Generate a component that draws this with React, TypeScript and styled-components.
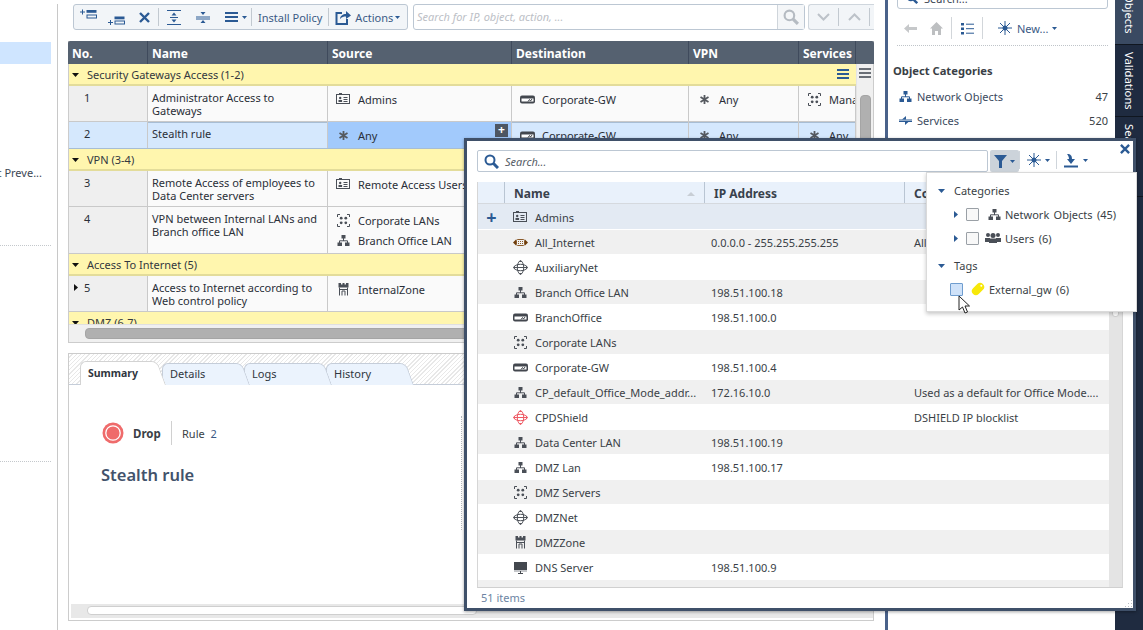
import React from "react";
import styled, { createGlobalStyle } from "styled-components";

const Global = createGlobalStyle`
  html, body { margin: 0; padding: 0; background: #fff; overflow: hidden; }
  * { box-sizing: border-box; }
  body { font-family: "Noto Sans", "Liberation Sans", sans-serif; font-size: 11px; color: #2a2f38; }
`;

const Page = styled.div`
  position: relative; width: 1143px; height: 630px; overflow: hidden; display: flex; background: #fff;
`;

/* ---------- icons ---------- */
type IP = { c?: string; s?: number };
const Svg = styled.svg`flex: none; display: block;`;
const IdCard = ({ c = "#4a4f57", s = 14 }: IP) => (
  <Svg width={s} height={s} viewBox="0 0 14 14"><rect x=".5" y="2.5" width="13" height="9" fill="none" stroke={c} /><rect x="3" y="1" width="3" height="2" fill={c} /><circle cx="4.2" cy="6" r="1.2" fill={c} /><rect x="2.5" y="8" width="3.6" height="2" fill={c} /><path d="M7.5 5.5h4M7.5 7.5h4M7.5 9.5h4" stroke={c} /></Svg>
);
const Gateway = ({ c = "#43474e", s = 15 }: IP) => (
  <Svg width={s} height={s} viewBox="0 0 15 15"><rect x="0" y="3.500" width="15" height="8" rx="2" fill={c} /><rect x="1.500" y="6.500" width="12" height="3" fill="#fff" /><path d="M8 9.500l1.500-2 1 1.500 1.500-2" stroke={c} fill="none" /></Svg>
);
const AnyIcon = ({ c = "#55595f", s = 11 }: IP) => (
  <Svg width={s} height={s} viewBox="0 0 11 11"><path d="M5.5 1v9M1.5 3l8 5M9.5 3l-8 5" stroke={c} strokeWidth="1.8" /></Svg>
);
const GroupIcon = ({ c = "#4a4f57", s = 13 }: IP) => (
  <Svg width={s} height={s} viewBox="0 0 13 13"><path d="M3 .5H.5V3M10 .5h2.500V3M.5 10v2.500H3M12.500 10v2.500H10" stroke={c} fill="none" /><circle cx="4.200" cy="4.200" r="1.400" fill={c} /><circle cx="8.800" cy="4.200" r="1.400" fill={c} /><circle cx="4.200" cy="8.800" r="1.400" fill={c} /><circle cx="8.800" cy="8.800" r="1.400" fill={c} /></Svg>
);
const TreeIcon = ({ c = "#4a4f57", s = 13 }: IP) => (
  <Svg width={s} height={s} viewBox="0 0 13 13"><rect x="4.500" y="1" width="4" height="3.500" fill={c} /><path d="M6.500 4v3M2.500 9V6.800h8V9" stroke={c} fill="none" /><rect x=".5" y="8.500" width="4.500" height="3.500" fill={c} /><rect x="8" y="8.500" width="4.500" height="3.500" fill={c} /></Svg>
);
const ZoneIcon = ({ c = "#4a4f57", s = 13 }: IP) => (
  <Svg width={s} height={s} viewBox="0 0 13 13"><path d="M1.500 0h2.500v1.500h1.500V0h2v1.500H9V0h2.500v4.500h-10z" fill={c} /><path d="M2.500 4.500v8M10.500 4.500v8M5 12.500V8h3v4.500M2.500 6.500h8" stroke={c} fill="none" /></Svg>
);
const NetIcon = ({ c = "#50555c", s = 15 }: IP) => (
  <Svg width={s} height={s} viewBox="0 0 15 15"><ellipse cx="7.500" cy="7.500" rx="6.500" ry="3.200" fill="none" stroke={c} /><ellipse cx="7.500" cy="7.500" rx="3.200" ry="6.500" fill="none" stroke={c} /><path d="M7.500 0l2 2h-4zM7.500 15l2-2h-4zM0 7.500l2-2v4zM15 7.500l-2-2v4z" fill={c} /><path d="M1 7.500h13" stroke={c} /></Svg>
);
const RangeIcon = () => (
  <Svg width={15} height={15} viewBox="0 0 15 15"><path d="M3 4.500L0 7.500l3 3zM12 4.500l3 3-3 3z" fill="#6e3d0c" /><rect x="3.500" y="4.500" width="8" height="6" rx="1" fill="none" stroke="#8a5a2a" /><path d="M5 6.500h5M5 8.500h5" stroke="#8a5a2a" strokeDasharray="1 1" /></Svg>
);
const Monitor = ({ c = "#43474e" }: IP) => (
  <Svg width={13} height={13} viewBox="0 0 13 13"><rect x="0" y="1" width="13" height="8" fill={c} /><rect x="0" y="9.500" width="13" height="1" fill="#8b8f95" /><path d="M4 12.500h5M6.500 10v2" stroke={c} /></Svg>
);
const Glass = ({ c = "#2b5a94", s = 15, w = 2 }: IP & { w?: number }) => (
  <Svg width={s} height={s} viewBox="0 0 15 15"><circle cx="6" cy="6" r="4.500" fill="none" stroke={c} strokeWidth={w} /><path d="M9.500 9.500L14 14" stroke={c} strokeWidth={w + 1} /></Svg>
);
const Caret = ({ c = "#2b5a94" }: IP) => (
  <Svg width={5} height={3} viewBox="0 0 5 3"><path d="M0 0h5L2.500 3z" fill={c} /></Svg>
);
const Tri = ({ dir = "down", c = "#111" }: { dir?: "down" | "right"; c?: string }) => (
  <Svg width={7} height={7} viewBox="0 0 7 7">{dir === "down" ? <path d="M0 2h7L3.500 6z" fill={c} /> : <path d="M2 0l4 3.500L2 7z" fill={c} />}</Svg>
);
const Burger = ({ c = "#2b5a94", s = 12 }: IP) => (
  <Svg width={s} height={10} viewBox="0 0 12 10" preserveAspectRatio="none"><path d="M0 1h12M0 5h12M0 9h12" stroke={c} strokeWidth="2" /></Svg>
);
const AddAbove = () => (
  <Svg width={17} height={11} viewBox="0 0 17 11"><path d="M0 3h5M2.500 .5v5" stroke="#2b5a94" /><rect x="6.500" y="1" width="10" height="2.800" fill="#2b5a94" /><rect x="7" y="6" width="9.500" height="3" fill="none" stroke="#2b5a94" /></Svg>
);
const AddBelow = () => (
  <Svg width={17} height={11} viewBox="0 0 17 11"><rect x="7" y="6" width="9.500" height="3" fill="none" stroke="#2b5a94" /><rect x="6.500" y="1.500" width="10" height="2.800" fill="#2b5a94" /><path d="M0 7.500h5M2.500 5v5" stroke="#2b5a94" /></Svg>
);
const Cross = ({ s = 11, w = 2.400 }: IP & { w?: number }) => (
  <Svg width={s} height={s} viewBox="0 0 11 11"><path d="M1 1l9 9M10 1l-9 9" stroke="#2b5a94" strokeWidth={w} /></Svg>
);
const Expand = () => (
  <Svg width={16} height={15} viewBox="0 0 16 15"><path d="M1 .5h14M1 14.500h14" stroke="#2b5a94" /><path d="M8 2.500l2.500 3h-5zM8 12.500l2.500-3h-5z" fill="#2b5a94" /><path d="M4 7.500h8" stroke="#2b5a94" /></Svg>
);
const Collapse = () => (
  <Svg width={16} height={15} viewBox="0 0 16 15"><path d="M8 5l2.500-3h-5zM8 10l2.500 3h-5z" fill="#2b5a94" /><path d="M1 7h14M1 9h14" stroke="#2b5a94" /></Svg>
);
const Share = () => (
  <Svg width={17} height={15} viewBox="0 0 17 15"><path d="M7 3H1.500v11H12V9" fill="none" stroke="#2b5a94" strokeWidth="2" /><path d="M5 9c0-3 3-5 6-5V1l5 4.500L11 9V6.500C9 6.500 6.500 7 5 9z" fill="#2b5a94" /></Svg>
);
const Star = () => (
  <Svg width={14} height={14} viewBox="0 0 14 14"><circle cx="7" cy="7" r="2.500" fill="#2b5a94" /><path d="M7 0v14M0 7h14M2 2l10 10M12 2L2 12" stroke="#2b5a94" /></Svg>
);
const Filter = () => (
  <Svg width={13} height={13} viewBox="0 0 13 13"><path d="M0 0h13L8 6v7H5V6z" fill="#2b5a94" /></Svg>
);
const ExportIcon = () => (
  <Svg width={15} height={15} viewBox="0 0 15 15"><path d="M3 1c4 0 5 2 5 5h3l-4 5-4-5h2C5 4 4 2 3 1z" fill="#2b5a94" /><path d="M0 13.500h14" stroke="#2b5a94" strokeWidth="2" /></Svg>
);
const Chev = ({ up }: { up?: boolean }) => (
  <Svg width={13} height={8} viewBox="0 0 13 8"><path d={up ? "M1 7l5.500-5.500L12 7" : "M1 1l5.500 5.500L12 1"} fill="none" stroke="#bcc2c9" strokeWidth="2" /></Svg>
);
const ArrowLeft = () => (
  <Svg width={13} height={9} viewBox="0 0 13 9"><path d="M0 4.500L5 0v3h8v3H5v3z" fill="#c6c8ca" /></Svg>
);
const Home = () => (
  <Svg width={13} height={13} viewBox="0 0 13 13"><path d="M6.500 0L13 6.500h-2V13H8V9H5v4H2V6.500H0z" fill="#bdbfc1" /></Svg>
);
const ListIcon = () => (
  <Svg width={13} height={13} viewBox="0 0 13 13"><path d="M0 1h3v2.400H0zM0 5.500h3v2.400H0zM0 10h3v2.400H0z" fill="#2b5a94" /><path d="M5 2.200h8M5 6.700h8M5 11.200h8" stroke="#2b5a94" /></Svg>
);
const ServicesIcon = () => (
  <Svg width={13} height={11} viewBox="0 0 13 11"><path d="M0 5h13M0 6.500h13" stroke="#2b5a94" /><path d="M3 4.500L7 1v3.500zM6 6.500h4L6 10z" fill="#2b5a94" /></Svg>
);
const UsersIcon = () => (
  <Svg width={16} height={12} viewBox="0 0 16 12"><circle cx="3" cy="3" r="2" fill="#4a4f57" /><circle cx="13" cy="3" r="2" fill="#4a4f57" /><circle cx="8" cy="3.500" r="2.500" fill="#4a4f57" /><path d="M0 10V6h5v4zM11 10V6h5v4zM4 11V6.500h8V11z" fill="#4a4f57" /></Svg>
);
const TagIcon = () => (
  <Svg width={14} height={14} viewBox="0 0 14 14"><rect x="0" y="3" width="14" height="8" rx="4" fill="#f7e80a" transform="rotate(-45 7 7)" /><circle cx="10.300" cy="3.700" r="1" fill="#fff" /></Svg>
);
const DropMark = () => (
  <Svg width={22} height={22} viewBox="0 0 22 22"><circle cx="11" cy="11" r="10.500" fill="#ef6b6b" /><circle cx="11" cy="11" r="7.200" fill="none" stroke="#fff" strokeWidth="1.300" /></Svg>
);
const CursorMark = () => (
  <Svg width={13} height={19} viewBox="0 0 13 19"><path d="M1 1v14l3.500-3 2.500 6 2.500-1-2.500-6h4.500z" fill="#fff" stroke="#222" strokeWidth="1" /></Svg>
);

/* ---------- left sidebar ---------- */
const Sidebar = styled.aside`
  width: 58px; flex: none; margin-top: 4px; border-right: 1px solid #c8c8c8; padding-top: 38px;
`;
const SideSelected = styled.div`width: 51px; height: 22px; background: #cfe5ff;`;
const SideText = styled.div`
  width: 42px; margin-top: 101px; height: 16px; line-height: 16px; display: flex; justify-content: flex-end;
  overflow: hidden; white-space: nowrap; color: #3c4654;
`;
const SideDots = styled.div<{ $gap: number }>`
  width: 51px; margin-top: ${p => p.$gap}px; border-top: 1px dotted #c4c8cc;
`;

/* ---------- main ---------- */
const Main = styled.main`
  width: 827px; flex: none; display: flex; flex-direction: column;
`;
const TopRow = styled.div`
  display: flex; height: 26px; margin: 4px 0 11px 15px;
`;
const Toolbar = styled.div`
  width: 335px; border: 1px solid #bcc7d3; border-radius: 3px; background: #f2f5f8; position: relative;
  display: flex; align-items: center; padding-left: 6px;
`;
const ToolSlot = styled.div<{ $w: number; $dy?: number }>`
  width: ${p => p.$w}px; flex: none; display: flex; align-items: center; justify-content: center; gap: 4px;
  transform: translateY(${p => p.$dy || 0}px);
`;
const ToolSep = styled.div`width: 1px; height: 18px; background: #c2c9d0; flex: none;`;
const ToolText = styled.div<{ $tight?: boolean }>`
  color: #3b5a85; font-size: 11px; white-space: nowrap; flex: none;
  padding: ${p => p.$tight ? "0 2px 0 3px" : "0 6px"};
`;
const SearchBox = styled.div`
  width: 392px; margin-left: 5px; display: flex; border: 1px solid #bcc7d3; border-radius: 3px; background: #fff;
`;
const SearchHint = styled.div`
  flex: 1; color: #bcc0c6; font-style: italic; padding-left: 3px; line-height: 24px; font-size: 11px;
`;
const SearchBtn = styled.div`
  width: 27px; border-left: 1px solid #cfd5db; background: #f4f6f8; display: flex; align-items: center; justify-content: center;
`;
const NavBox = styled.div`
  width: 66px; margin-left: 3px; display: flex; align-items: center; border: 1px solid #cfd6dd; border-right: none;
  border-radius: 3px 0 0 3px; background: #f2f5f8;
`;
const NavSlot = styled.div<{ $w: number }>`
  width: ${p => p.$w}px; height: 18px; flex: none; display: flex; align-items: center; justify-content: center;
  & + & { border-left: 1px solid #c2c9d0; }
`;

/* ---------- rule table ---------- */
const RuleTable = styled.section`
  width: 806px; height: 302px; margin-left: 10px; display: flex; flex-direction: column;
  border-left: 1px solid #ccc; border-right: 1px solid #ccc; border-bottom: 1px solid #ccc;
`;
const HeadRow = styled.div`
  display: grid; grid-template-columns: 80px 180px 184px 177px 110px 57px 18px; height: 23px; background: #556170; flex: none;
  border-radius: 2px 2px 0 0; margin-left: -1px; margin-right: -1px;
`;
const HeadCell = styled.div`
  color: #fff; font-weight: 700; font-size: 12px; line-height: 25px; padding-left: 4px; white-space: nowrap; overflow: hidden;
  border-right: 1px solid #3f4a5c;
  &:last-child { border-right: none; }
`;
const TableMid = styled.div`display: flex; flex: 1; min-height: 0;`;
const RuleBody = styled.div`width: 787px; overflow: hidden;`;
const GroupRow = styled.div`
  height: 22px; background: #fff6ae; border-bottom: 2px solid #e3dc9a; display: flex; align-items: center;
  padding: 0 7px 0 3px; gap: 8px; color: #33383f; white-space: nowrap;
`;
const GroupSpacer = styled.div`flex: 1;`;
const RuleRow = styled.div<{ $h: number; $sel?: boolean }>`
  display: grid; grid-template-columns: 79px 180px 184px 177px 110px 57px; height: ${p => p.$h}px;
  border-bottom: 1px solid ${p => p.$sel ? "#a7bdd4" : "#c9c9c9"};
  background: ${p => p.$sel ? "#d5e8fd" : "#fafafa"};
  ${p => p.$sel ? "box-shadow: inset 0 1px 0 #a7bdd4;" : ""}
`;
const RCell = styled.div<{ $hl?: boolean }>`
  position: relative; border-right: 1px solid #c9c9c9; padding: 5px 0 0 4px; line-height: 13px; color: #2a2f38; overflow: hidden;
  ${p => p.$hl ? "background: #a2cafc;" : ""}
`;
const NoCell = styled.div<{ $sel?: boolean }>`
  border-right: 1px solid #c9c9c9; line-height: 13px; padding: 5px 0 0 3px; display: flex; gap: 2px; color: #2a2f38;
  background: ${p => p.$sel ? "#d5e8fd" : "#efefef"};
`;
const NoSpacer = styled.div`width: 10px; display: flex; padding-top: 3px;`;
const ObjList = styled.div`display: flex; flex-direction: column; gap: 6px; padding: 1px 0 0 4px;`;
const Obj = styled.div`display: flex; align-items: center; height: 14px; gap: 8px; white-space: nowrap;`;
const IconBox = styled.div`width: 14px; display: flex; justify-content: center; flex: none;`;
const PlusBadge = styled.div`
  position: absolute; right: 3px; top: 2px; width: 13px; height: 13px; background: #4d5663; color: #fff;
  text-align: center; line-height: 12px; font-size: 12px; font-weight: 700;
`;
const VScroll = styled.div`
  width: 17px; flex: none; background: #f0f0f0; border-left: 1px solid #e4e4e4; display: flex; flex-direction: column; align-items: center; padding-top: 4px;
`;
const VThumb = styled.div`
  width: 11px; height: 120px; margin-top: 17px; background: #b0b0b0; border-radius: 4px; border: 1px solid #a5a5a5;
`;
const HScroll = styled.div`
  height: 18px; flex: none; background: #f0f0f0; border-top: 1px solid #e0e0e0; padding: 3px 0 0 16px;
`;
const HThumb = styled.div`height: 11px; width: 500px; background: #b0b0b0; border-radius: 4px; border: 1px solid #a5a5a5;`;

/* ---------- details panel ---------- */
const Details = styled.section`
  width: 806px; height: 268px; margin: 10px 0 0 10px; border: 1px solid #ccc; display: flex; flex-direction: column;
`;
const TabStrip = styled.div`
  height: 31px; flex: none; display: flex; align-items: flex-end; padding-left: 11px;
  border-bottom: 1px solid #c5cdd9;
  background: repeating-linear-gradient(135deg, #fff 0 2px, #e8e8e8 2px 3px);
`;
const TabItem = styled.div<{ $active?: boolean; $z: number }>`
  position: relative; width: 82px; height: ${p => p.$active ? 24 : 22}px; flex: none; padding-left: 8px;
  line-height: ${p => p.$active ? 25 : 22}px; margin-bottom: -1px;
  font-weight: ${p => p.$active ? 700 : 400}; font-size: ${p => p.$active ? "10.5px" : "11px"}; color: #2f3640; z-index: ${p => p.$z};
  & > span { position: relative; z-index: 2; }
  &::before {
    content: ""; position: absolute; inset: 0 ${p => p.$active ? -4 : -6}px 0 30px; transform-origin: bottom left; transform: skewX(20deg);
    background: ${p => p.$active ? "#fff" : "#ebf3fd"}; border: 1px solid ${p => p.$active ? "#d3d3d3" : "#c5cdd9"};
    border-bottom: none; border-left: none; border-radius: 0 6px 0 0;
  }
  &::after {
    content: ""; position: absolute; top: 0; bottom: 0; left: 0; width: 40px;
    background: ${p => p.$active ? "#fff" : "#ebf3fd"}; border: 1px solid ${p => p.$active ? "#d3d3d3" : "#c5cdd9"};
    border-bottom: none; border-right: none; border-radius: 6px 0 0 0;
  }
`;
const SummaryBody = styled.div`flex: 1; display: flex; min-height: 0;`;
const SummaryLeft = styled.div`width: 392px; padding: 36px 0 0 32px;`;
const SummaryRight = styled.div`
  height: 114px; margin-top: 31px; border-left: 1px dotted #b5b9bf; flex: 1;
`;
const ActionLine = styled.div`display: flex; align-items: center; height: 24px; margin-left: 1px;`;
const DropLabel = styled.div`font-weight: 700; font-size: 11.5px; margin-left: 9px; width: 28px; color: #3a3f46;`;
const Vsep = styled.div`width: 1px; height: 24px; background: #d0d0d0; margin: 0 10px 0 10px;`;
const RuleLabel = styled.div`color: #3a3f46; font-size: 11px; white-space: pre;`;
const RuleNum = styled.span`color: #3b5a85;`;
const Title = styled.div`
  margin-top: 18px; font-size: 16.5px; font-weight: 600; color: #42526b; line-height: 24px;
`;
const DetailScroll = styled.div`
  height: 14px; flex: none; margin: 0 0 2px 2px; background: #e8e8e8; padding: 2px 0 0 16px;
`;
const DetailThumb = styled.div`height: 9px; width: 390px; background: #fff; border: 1px solid #cfcfcf; border-radius: 4px;`;

/* ---------- right panel ---------- */
const Divider = styled.div`width: 3px; flex: none; background: #4a628a;`;
const RightPanel = styled.aside`width: 227px; flex: none; padding: 0 7px 0 5px;`;
const ObjSearch = styled.div`
  height: 22px; margin: -13px 0 0 4px; border: 1px solid #bcc7d3; border-radius: 3px; display: flex; align-items: center; gap: 6px; padding-left: 8px; color: #3c4654;
`;
const RightTools = styled.div`
  height: 22px; margin: 8px 0 0 11px; display: flex; align-items: center;
`;
const RSep = styled.div`width: 1px; height: 22px; background: #d2d6da; flex: none;`;
const RGap = styled.div<{ $w: number }>`width: ${p => p.$w}px; flex: none;`;
const NewLabel = styled.div`color: #3b5a85; font-size: 11px; margin: 0 4px 0 5px;`;
const RDots = styled.div`margin: 6px 0 0 4px; border-top: 1px dotted #bfc4c9;`;
const CatTitle = styled.div`font-weight: 700; font-size: 11.2px; color: #3a3f46; margin-top: 17px; line-height: 16px;`;
const CatList = styled.div`display: flex; flex-direction: column; gap: 8px; margin-top: 9px;`;
const CatRow = styled.div`display: flex; align-items: center; height: 16px; padding-left: 6px; gap: 5px; color: #3b4a60;`;
const CatCount = styled.div`margin-left: auto; color: #3a3f46;`;

/* ---------- rail ---------- */
const Rail = styled.nav`
  width: 28px; flex: none; background: #1f2b40; margin-top: -8px; display: flex; flex-direction: column;
`;
const RailTab = styled.div<{ $h: number; $active?: boolean }>`
  height: ${p => p.$h}px; flex: none; writing-mode: vertical-rl; color: #fff; font-size: 11.2px; line-height: 28px;
  background: ${p => p.$active ? "#3a4a62" : "#1f2b40"}; border-bottom: 1px solid #10161f; padding-top: ${p => p.$active ? 2 : 7}px; white-space: nowrap;
`;

/* ---------- popup ---------- */
const Popup = styled.div`
  position: absolute; left: 464px; top: 138px; width: 672px; height: 473px; background: #fff; z-index: 10;
  border: 3px solid #3f5069; display: flex; flex-direction: column; padding: 9px 10px 0 10px; box-shadow: 0 1px 3px rgba(0,0,0,.35);
`;
const CloseBtn = styled.div`position: absolute; right: 3px; top: 3px;`;
const PopTop = styled.div`display: flex; height: 22px; align-items: stretch; flex: none;`;
const PopSearch = styled.div`
  width: 511px; border: 1px solid #bcc7d3; border-radius: 2px; display: flex; align-items: center; padding-left: 6px; gap: 6px;
  color: #555c66; font-style: italic;
`;
const FilterBtn = styled.div`
  width: 29px; margin-left: 2px; background: #ccd3da; border-radius: 2px; display: flex; align-items: center; justify-content: center; gap: 3px;
`;
const PopTool = styled.div<{ $w: number }>`
  width: ${p => p.$w}px; display: flex; align-items: center; justify-content: center; gap: 4px; border-left: 1px solid #cfd5db; margin: 1px 0 3px;
`;
const Grid = styled.div`
  margin-top: 10px; width: 646px; height: 406px; flex: none; border-bottom: 1px solid #d0d0d0; border-left: 1px solid #d6d6d6; border-right: 1px solid #d6d6d6; display: flex; flex-direction: column;
`;
const GridHead = styled.div`
  display: grid; grid-template-columns: 27px 200px 200px 1fr 13px; height: 22px; flex: none; background: #e9f1fb; border-bottom: 1px solid #d5d9de;
`;
const GHCell = styled.div`
  border-right: 1px solid #b9c5d3; font-weight: 700; font-size: 12px; padding: 2px 9px 0 9px; color: #39414c; display: flex; align-items: center; justify-content: space-between; white-space: nowrap; overflow: hidden;
`;
const SortUp = styled.div`width: 0; height: 0; border-left: 4px solid transparent; border-right: 4px solid transparent; border-bottom: 4px solid #c8ced5;`;
const GridMid = styled.div`flex: 1; display: flex; min-height: 0; overflow: hidden;`;
const GridRows = styled.div`flex: 1; overflow: hidden;`;
const GRow = styled.div<{ $kind: "sel" | "odd" | "even" }>`
  display: grid; grid-template-columns: 27px 200px 200px 1fr; align-items: center;
  height: ${p => p.$kind === "odd" ? 24 : 26}px;
  background: ${p => p.$kind === "sel" ? "#e3eaf3" : p.$kind === "odd" ? "#f0f0f0" : "#fff"};
  ${p => p.$kind === "sel" ? "border-bottom: 1px solid #fff; padding-top: 1px;" : ""}
  color: #3a3f46;
`;
const GExp = styled.div`display: flex; justify-content: center;`;
const GName = styled.div`display: flex; align-items: center; gap: 8px; padding-left: 8px; white-space: nowrap; overflow: hidden;`;
const GText = styled.div`padding-left: 6px; white-space: nowrap;`;
const GComment = styled.div`padding-left: 9px; white-space: nowrap; overflow: hidden;`;
const PlusMark = styled.div`color: #2b5a94; font-size: 18px; font-weight: 700; line-height: 16px;`;
const GScroll = styled.div`width: 13px; flex: none; background: #e4e4e4; padding: 0 3px;`;
const GThumb = styled.div`width: 7px; height: 113px; background: #fff; border: 1px solid #d2d2d2; border-radius: 3px;`;
const Footer = styled.div`height: 20px; line-height: 19px; padding-left: 4px; color: #6d84a3; flex: none;`;
const Grip = styled.div`
  position: absolute; right: 1px; bottom: 1px; width: 8px; height: 8px;
  background: radial-gradient(circle, #b9bec4 1px, transparent 1px) 0 0 / 3px 3px;
  clip-path: polygon(100% 0, 100% 100%, 0 100%);
`;

/* ---------- filter menu ---------- */
const Menu = styled.div`
  position: absolute; left: 926px; top: 172px; width: 211px; height: 140px; background: #fff; z-index: 20;
  border: 1px solid #dadada; box-shadow: 0 2px 4px rgba(0,0,0,.22); padding-top: 5px; color: #3a3f46; word-spacing: 1.5px;
`;
const MenuRow = styled.div<{ $pl: number; $mt?: number }>`
  height: 24px; display: flex; align-items: center; padding-left: ${p => p.$pl}px; margin-top: ${p => p.$mt || 0}px; white-space: nowrap;
`;
const MenuTri = styled.div<{ $gap: number }>`width: ${p => p.$gap}px; flex: none; display: flex;`;
const MenuLabel = styled.div`padding-left: 4px;`;
const Check = styled.div<{ $on?: boolean }>`
  width: 13px; height: 13px; flex: none; border: 1px solid ${p => p.$on ? "#6f9dcf" : "#9aa0a6"}; border-radius: 1px; background: ${p => p.$on ? "#cfe2f9" : "#f8f8f8"};
`;
const MenuIcon = styled.div<{ $ml: number; $w: number }>`width: ${p => p.$w}px; margin-left: ${p => p.$ml}px; flex: none; display: flex; justify-content: center;`;
const CursorWrap = styled.div`position: absolute; left: 958px; top: 295px; z-index: 30;`;

/* ---------- data ---------- */
type Row = { name: string; icon: React.ReactNode; ip?: string; comment?: string };
const rows: Row[] = [
  { name: "All_Internet", icon: <RangeIcon />, ip: "0.0.0.0 - 255.255.255.255", comment: "All" },
  { name: "AuxiliaryNet", icon: <NetIcon /> },
  { name: "Branch Office LAN", icon: <TreeIcon />, ip: "198.51.100.18" },
  { name: "BranchOffice", icon: <Gateway />, ip: "198.51.100.0" },
  { name: "Corporate LANs", icon: <GroupIcon /> },
  { name: "Corporate-GW", icon: <Gateway />, ip: "198.51.100.4" },
  { name: "CP_default_Office_Mode_addr...", icon: <TreeIcon />, ip: "172.16.10.0", comment: "Used as a default for Office Mode...." },
  { name: "CPDShield", icon: <NetIcon c="#ee5c66" />, comment: "DSHIELD IP blocklist" },
  { name: "Data Center LAN", icon: <TreeIcon />, ip: "198.51.100.19" },
  { name: "DMZ Lan", icon: <TreeIcon />, ip: "198.51.100.17" },
  { name: "DMZ Servers", icon: <GroupIcon /> },
  { name: "DMZNet", icon: <NetIcon /> },
  { name: "DMZZone", icon: <ZoneIcon /> },
  { name: "DNS Server", icon: <Monitor />, ip: "198.51.100.9" },
  { name: "DNS Servers", icon: <Monitor /> },
];

const ObjCell = ({ items, hl, badge }: { items: [React.ReactNode, string][]; hl?: boolean; badge?: boolean }) => (
  <RCell $hl={hl}>
    <ObjList>
      {items.map(([ic, t]) => <Obj key={t}><IconBox>{ic}</IconBox>{t}</Obj>)}
    </ObjList>
    {badge && <PlusBadge>+</PlusBadge>}
  </RCell>
);

export default function App() {
  return (
    <Page>
      <Global />
      <Sidebar>
        <SideSelected />
        <SideText>Threat Preve...</SideText>
        <SideDots $gap={64} />
        <SideDots $gap={215} />
      </Sidebar>

      <Main>
        <TopRow>
          <Toolbar>
            <ToolSlot $w={17} $dy={-3}><AddAbove /></ToolSlot>
            <ToolSlot $w={11} />
            <ToolSlot $w={17} $dy={3}><AddBelow /></ToolSlot>
            <ToolSlot $w={14} />
            <ToolSlot $w={11}><Cross /></ToolSlot>
            <ToolSlot $w={8} />
            <ToolSep />
            <ToolSlot $w={7} />
            <ToolSlot $w={16}><Expand /></ToolSlot>
            <ToolSlot $w={13} />
            <ToolSlot $w={16}><Collapse /></ToolSlot>
            <ToolSlot $w={13} />
            <ToolSlot $w={23}><Burger s={13} /><Caret /></ToolSlot>
            <ToolSlot $w={4} />
            <ToolSep />
            <ToolText>Install Policy</ToolText>
            <ToolSep />
            <ToolSlot $w={6} />
            <Share />
            <ToolText $tight>Actions</ToolText>
            <Caret />
          </Toolbar>
          <SearchBox>
            <SearchHint>Search for IP, object, action, ...</SearchHint>
            <SearchBtn><Glass c="#b5bbc2" s={16} /></SearchBtn>
          </SearchBox>
          <NavBox>
            <NavSlot $w={29}><Chev /></NavSlot>
            <NavSlot $w={31}><Chev up /></NavSlot>
            <NavSlot $w={5} />
          </NavBox>
        </TopRow>

        <RuleTable>
          <HeadRow>
            <HeadCell>No.</HeadCell>
            <HeadCell>Name</HeadCell>
            <HeadCell>Source</HeadCell>
            <HeadCell>Destination</HeadCell>
            <HeadCell>VPN</HeadCell>
            <HeadCell>Services &amp; Applications</HeadCell>
            <HeadCell />
          </HeadRow>
          <TableMid>
            <RuleBody>
              <GroupRow>
                <Tri /><span>Security Gateways Access (1-2)</span><GroupSpacer /><Burger />
              </GroupRow>
              <RuleRow $h={36}>
                <NoCell><NoSpacer />1</NoCell>
                <RCell>Administrator Access to<br />Gateways</RCell>
                <ObjCell items={[[<IdCard />, "Admins"]]} />
                <ObjCell items={[[<Gateway />, "Corporate-GW"]]} />
                <ObjCell items={[[<AnyIcon />, "Any"]]} />
                <ObjCell items={[[<GroupIcon />, "Managed Services"]]} />
              </RuleRow>
              <RuleRow $h={27} $sel>
                <NoCell $sel><NoSpacer />2</NoCell>
                <RCell>Stealth rule</RCell>
                <ObjCell hl badge items={[[<AnyIcon />, "Any"]]} />
                <ObjCell items={[[<Gateway />, "Corporate-GW"]]} />
                <ObjCell items={[[<AnyIcon />, "Any"]]} />
                <ObjCell items={[[<AnyIcon />, "Any"]]} />
              </RuleRow>
              <GroupRow><Tri /><span>VPN (3-4)</span></GroupRow>
              <RuleRow $h={36}>
                <NoCell><NoSpacer />3</NoCell>
                <RCell>Remote Access of employees to<br />Data Center servers</RCell>
                <ObjCell items={[[<IdCard />, "Remote Access Users"]]} />
                <RCell /><RCell /><RCell />
              </RuleRow>
              <RuleRow $h={47}>
                <NoCell><NoSpacer />4</NoCell>
                <RCell>VPN between Internal LANs and<br />Branch office LAN</RCell>
                <ObjCell items={[[<GroupIcon />, "Corporate LANs"], [<TreeIcon />, "Branch Office LAN"]]} />
                <RCell /><RCell /><RCell />
              </RuleRow>
              <GroupRow><Tri /><span>Access To Internet (5)</span></GroupRow>
              <RuleRow $h={36}>
                <NoCell><NoSpacer><Tri dir="right" /></NoSpacer>5</NoCell>
                <RCell>Access to Internet according to<br />Web control policy</RCell>
                <ObjCell items={[[<ZoneIcon />, "InternalZone"]]} />
                <RCell /><RCell /><RCell />
              </RuleRow>
              <GroupRow><Tri /><span>DMZ (6-7)</span></GroupRow>
            </RuleBody>
            <VScroll>
              <Burger c="#6a6f76" />
              <VThumb />
            </VScroll>
          </TableMid>
          <HScroll><HThumb /></HScroll>
        </RuleTable>

        <Details>
          <TabStrip>
            <TabItem $active $z={4}><span>Summary</span></TabItem>
            <TabItem $z={3}><span>Details</span></TabItem>
            <TabItem $z={2}><span>Logs</span></TabItem>
            <TabItem $z={1}><span>History</span></TabItem>
          </TabStrip>
          <SummaryBody>
            <SummaryLeft>
              <ActionLine>
                <DropMark />
                <DropLabel>Drop</DropLabel>
                <Vsep />
                <RuleLabel>Rule  <RuleNum>2</RuleNum></RuleLabel>
              </ActionLine>
              <Title>Stealth rule</Title>
            </SummaryLeft>
            <SummaryRight />
          </SummaryBody>
          <DetailScroll><DetailThumb /></DetailScroll>
        </Details>
      </Main>

      <Divider />

      <RightPanel>
        <ObjSearch><Glass s={12} />Search...</ObjSearch>
        <RightTools>
          <ArrowLeft />
          <RGap $w={13} />
          <Home />
          <RGap $w={8} />
          <RSep />
          <RGap $w={9} />
          <ListIcon />
          <RGap $w={8} />
          <RSep />
          <RGap $w={15} />
          <Star />
          <NewLabel>New...</NewLabel>
          <Caret />
        </RightTools>
        <RDots />
        <CatTitle>Object Categories</CatTitle>
        <CatList>
          <CatRow><TreeIcon c="#2b5a94" />Network Objects<CatCount>47</CatCount></CatRow>
          <CatRow><ServicesIcon />Services<CatCount>520</CatCount></CatRow>
        </CatList>
      </RightPanel>

      <Rail>
        <RailTab $h={53} $active>Objects</RailTab>
        <RailTab $h={72}>Validations</RailTab>
        <RailTab $h={80}>Search</RailTab>
      </Rail>

      <Popup>
        <CloseBtn><Cross s={10} w={2.600} /></CloseBtn>
        <PopTop>
          <PopSearch><Glass s={15} />Search...</PopSearch>
          <FilterBtn><Filter /><Caret /></FilterBtn>
          <PopTool $w={37}><Star /><Caret /></PopTool>
          <PopTool $w={39}><ExportIcon /><Caret /></PopTool>
        </PopTop>
        <Grid>
          <GridHead>
            <GHCell />
            <GHCell>Name<SortUp /></GHCell>
            <GHCell>IP Address</GHCell>
            <GHCell>Comments</GHCell>
            <GHCell />
          </GridHead>
          <GridMid>
            <GridRows>
              <GRow $kind="sel">
                <GExp><PlusMark>+</PlusMark></GExp>
                <GName><IconBox><IdCard /></IconBox>Admins</GName>
                <GText /><GComment />
              </GRow>
              {rows.map((r, i) => (
                <GRow key={r.name} $kind={i % 2 === 0 ? "odd" : "even"}>
                  <GExp />
                  <GName><IconBox>{r.icon}</IconBox>{r.name}</GName>
                  <GText>{r.ip}</GText>
                  <GComment>{r.comment}</GComment>
                </GRow>
              ))}
            </GridRows>
            <GScroll><GThumb /></GScroll>
          </GridMid>
        </Grid>
        <Footer>51 items</Footer>
        <Grip />
      </Popup>

      <Menu>
        <MenuRow $pl={11}><MenuTri $gap={16}><Tri c="#2b5a94" /></MenuTri>Categories</MenuRow>
        <MenuRow $pl={25}><MenuTri $gap={14}><Tri dir="right" c="#2b5a94" /></MenuTri><Check /><MenuIcon $ml={9} $w={13}><TreeIcon /></MenuIcon><MenuLabel>Network Objects (45)</MenuLabel></MenuRow>
        <MenuRow $pl={25}><MenuTri $gap={14}><Tri dir="right" c="#2b5a94" /></MenuTri><Check /><MenuIcon $ml={6} $w={16}><UsersIcon /></MenuIcon><MenuLabel>Users (6)</MenuLabel></MenuRow>
        <MenuRow $pl={11} $mt={3}><MenuTri $gap={16}><Tri c="#2b5a94" /></MenuTri>Tags</MenuRow>
        <MenuRow $pl={23}><Check $on /><MenuIcon $ml={8} $w={14}><TagIcon /></MenuIcon><MenuLabel>External_gw (6)</MenuLabel></MenuRow>
      </Menu>
      <CursorWrap><CursorMark /></CursorWrap>
    </Page>
  );
}
